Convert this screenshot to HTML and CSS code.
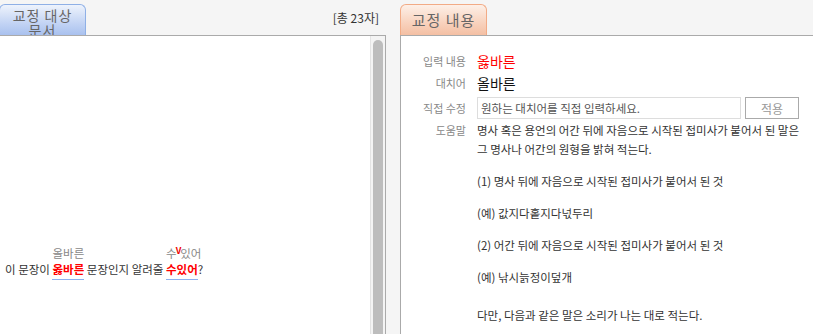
FILE: index.html
```html
<!DOCTYPE html>
<html>
    <head>
        <meta charset="utf-8">
        <title>맞춤법 검사</title>
        <link rel="stylesheet" href="styles.css">
    </head>
    <body>
        <div class="wrap">
            <div class="left">
                <div class="head">
                    <div class="tab tab-blue">교정 대상 문서</div>
                    <div class="count">[총 23자]</div>
                </div>
                <div class="doc">
                    <div class="doc-text">
                        이 문장이
                        <span class="err"><span class="sug">올바른</span><span class="bad">옳바른</span></span>
                        문장인지 알려줄
                        <span class="err"><span class="sug">수<b class="v">V</b>있어</span><span class="bad">수있어</span></span>?
                    </div>
                    <div class="scroll"><div class="thumb"></div></div>
                </div>
            </div>
            <div class="right">
                <div class="head">
                    <div class="tab tab-orange">교정 내용</div>
                </div>
                <div class="info">
                    <div class="row">
                        <div class="label">입력 내용</div>
                        <div class="value red">옳바른</div>
                    </div>
                    <div class="row">
                        <div class="label">대치어</div>
                        <div class="value">올바른</div>
                    </div>
                    <div class="row row-edit">
                        <div class="label">직접 수정</div>
                        <div class="value edit">
                            <input type="text" class="field" placeholder="원하는 대치어를 직접 입력하세요.">
                            <button class="apply">적용</button>
                        </div>
                    </div>
                    <div class="row row-help">
                        <div class="label">도움말</div>
                        <div class="value help">
                            <p>명사 혹은 용언의 어간 뒤에 자음으로 시작된 접미사가 붙어서 된 말은<br>그 명사나 어간의 원형을 밝혀 적는다.</p>
                            <p>(1) 명사 뒤에 자음으로 시작된 접미사가 붙어서 된 것</p>
                            <p>(예) 값지다홑지다넋두리</p>
                            <p>(2) 어간 뒤에 자음으로 시작된 접미사가 붙어서 된 것</p>
                            <p>(예) 낚시늙정이덮개</p>
                            <p class="last">다만, 다음과 같은 말은 소리가 나는 대로 적는다.</p>
                        </div>
                    </div>
                </div>
            </div>
        </div>
    </body>
</html>
```

FILE: styles.css
```css
*{
    box-sizing: border-box;
}
body{
    margin: 0;
    background-color: #f5f5f5;
    font-family: "Noto Sans CJK KR", "Noto Sans", sans-serif;
    font-size: 12px;
    color: #333;
    overflow: hidden;
}
.wrap{
    display: flex;
    height: 334px;
}
.left{
    width: 386px;
    margin-right: 14px;
    display: flex;
    flex-direction: column;
}
.right{
    flex: 1;
    display: flex;
    flex-direction: column;
}
.head{
    height: 35px;
    display: flex;
    align-items: flex-end;
    justify-content: space-between;
}
.tab{
    width: 87px;
    height: 31px;
    border: 1px solid;
    border-bottom: none;
    border-radius: 6px 6px 0 0;
    color: #666;
    text-align: center;
    overflow: hidden;
}
.tab-blue{
    margin-left: -1px;
    padding: 3px 12px 0 12px;
    font-size: 14px;
    line-height: 15px;
    letter-spacing: 1px;
    border-color: #8fb0e6;
    background: linear-gradient(#eef3fc, #c3d4f4 60%, #a9c1ee);
}
.tab-orange{
    font-size: 15px;
    line-height: 29px;
    letter-spacing: 1px;
    border-color: #f2ab86;
    background: linear-gradient(#fdf0e8, #f8d2bd 60%, #f4c0a4);
}
.count{
    font-size: 12px;
    line-height: 16px;
    margin-bottom: 9px;
    margin-right: 7px;
    color: #333;
}
.doc{
    flex: 1;
    display: flex;
    background-color: #fff;
    border-top: 1px solid #aaa;
    border-right: 1px solid #aaa;
}
.doc-text{
    flex: 1;
    padding: 225px 0 0 5px;
    font-size: 11.5px;
    line-height: 16px;
    color: #333;
}
.err{
    display: inline-block;
    position: relative;
    text-align: center;
    border-bottom: 1px solid #8cb1ef;
    padding-bottom: 2px;
}
.sug{
    position: absolute;
    left: 0;
    right: 0;
    top: -16px;
    color: #888;
    white-space: nowrap;
}
.v{
    color: #e00;
    font-size: 9px;
    position: relative;
    top: -4px;
    margin: 0 -1px;
}
.bad{
    color: #f00;
    font-weight: bold;
}
.scroll{
    width: 15px;
    border-left: 1px solid #e4e4e4;
    background-color: #f4f4f4;
    padding: 4px 2px 0 2px;
}
.thumb{
    height: 100%;
    background-color: #bdbdbd;
    border-radius: 5px 5px 0 0;
}
.info{
    flex: 1;
    background-color: #fff;
    border-top: 1px solid #aaa;
    border-left: 1px solid #aaa;
    padding-top: 14px;
}
.row{
    display: flex;
    align-items: center;
    height: 22px;
}
.row-edit{
    height: 26px;
    margin-top: 1px;
}
.row-help{
    align-items: flex-start;
}
.label{
    width: 65px;
    text-align: right;
    font-size: 11px;
    color: #888;
    line-height: 18px;
}
.value{
    margin-left: 11px;
    font-size: 14px;
    color: #111;
}
.red{
    color: #f00;
}
.edit{
    display: flex;
    gap: 4px;
}
.field{
    width: 264px;
    height: 22px;
    border: 1px solid #ddd;
    padding: 0 3px;
    font-family: inherit;
    font-size: 11.5px;
    color: #444;
}
.field::placeholder{
    color: #555;
}
.apply{
    width: 54px;
    height: 22px;
    border: 1px solid #aaa;
    background-color: #fff;
    font-family: inherit;
    font-size: 12px;
    color: #999;
}
.help{
    font-size: 11.5px;
    color: #333;
    line-height: 19px;
}
.help p{
    margin: 0 0 13px 0;
}
.help p.last{
    margin-top: 19px;
}
```
